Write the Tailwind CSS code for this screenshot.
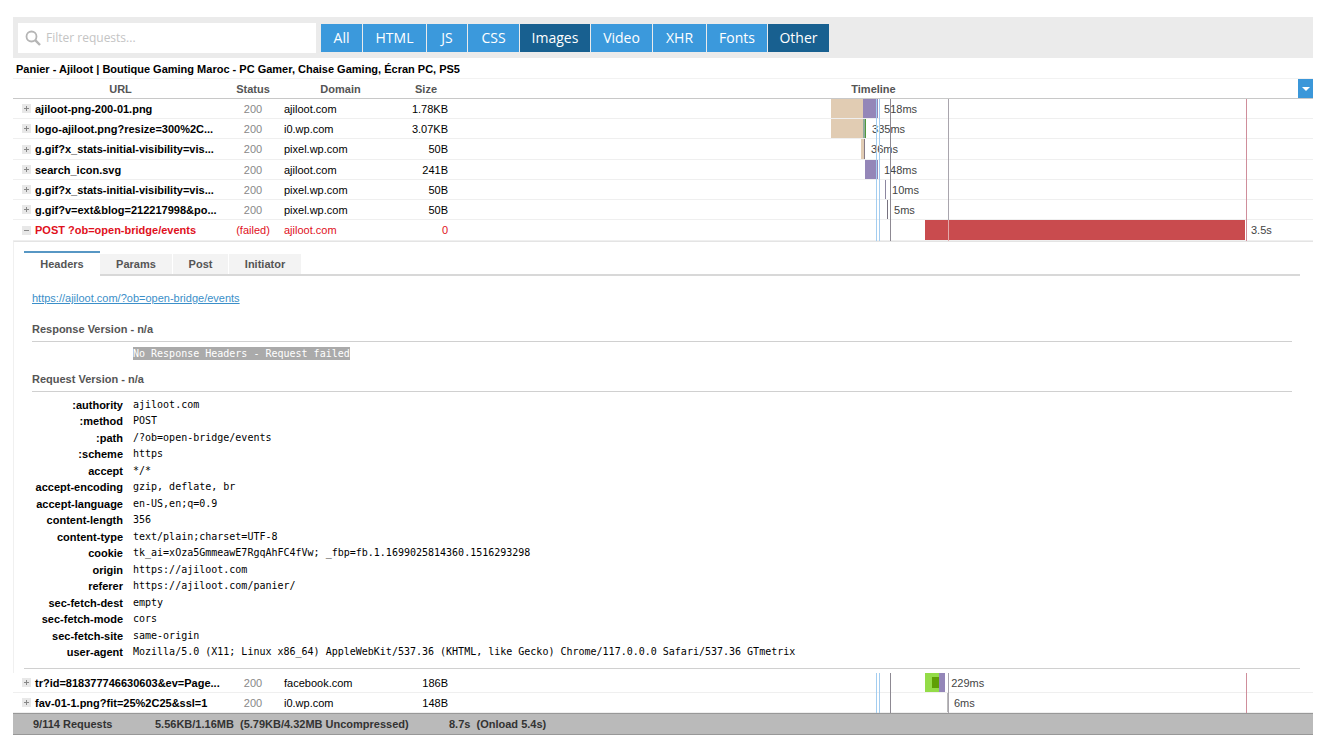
<!DOCTYPE html>
<html lang="en">
<head>
    <meta charset="UTF-8">
    <meta name="viewport" content="width=device-width, initial-scale=1.0">
    <title>Waterfall - Panier - Ajiloot</title>
    <script src="https://cdn.jsdelivr.net/npm/@tailwindcss/browser@4"></script>
</head>
<body class="bg-white pt-[17px] pl-[13px] pr-[14px] pb-2 font-['Liberation_Sans',Arial,sans-serif] text-[11px] leading-4 text-black">
    <header class="flex items-center gap-[5px] bg-[#ebebeb] pl-[5px] pt-[6px] pb-[5px] font-['Open_Sans',sans-serif]">
        <label class="flex items-center w-[298px] h-[30px] bg-white pl-[7px] gap-[5px]">
            <svg class="size-4 shrink-0" viewBox="0 0 16 16" fill="none" stroke="#b5b5b5" stroke-width="1.8" aria-hidden="true">
                <circle cx="6.5" cy="6.5" r="5"/>
                <path d="M10.2 10.2 15 15" stroke-width="2.4"/>
            </svg>
            <input type="text" aria-label="Filter requests" placeholder="Filter requests..." class="w-full text-[12px] outline-none placeholder:text-[#c4c4c4]">
        </label>
        <nav id="filters" class="flex gap-px h-7 text-[14px] text-white"></nav>
    </header>

    <main>
        <h1 class="pl-[3px] pt-[3px] pb-px font-bold">Panier - Ajiloot | Boutique Gaming Maroc - PC Gamer, Chaise Gaming, Écran PC, PS5</h1>
        <table class="w-full table-fixed border-separate border-spacing-0">
            <colgroup>
                <col class="w-[215px]">
                <col class="w-[50px]">
                <col class="w-[125px]">
                <col class="w-[46px]">
                <col>
            </colgroup>
            <thead class="text-[#555]">
                <tr class="h-[21px]">
                    <th class="p-0 border-y border-t-[#f2f2f2] border-b-[#c8c8c8]">URL</th>
                    <th class="p-0 border-y border-t-[#f2f2f2] border-b-[#c8c8c8]">Status</th>
                    <th class="p-0 border-y border-t-[#f2f2f2] border-b-[#c8c8c8]">Domain</th>
                    <th class="p-0 border-y border-t-[#f2f2f2] border-b-[#c8c8c8]">Size</th>
                    <th class="p-0 border-y border-t-[#f2f2f2] border-b-[#c8c8c8]">
                        <div class="flex items-center">
                            <span class="flex-1">Timeline</span>
                            <button type="button" aria-label="Columns" class="flex items-center justify-center w-[15px] h-[19px] bg-[#3b97d9]">
                                <svg class="w-2 h-1" viewBox="0 0 8 4" fill="#fff"><path d="M0 0h8L4 4z"/></svg>
                            </button>
                        </div>
                    </th>
                </tr>
            </thead>
            <tbody id="requests-before"></tbody>
            <tbody>
                <tr>
                    <td colspan="5" class="p-0 pt-[9px] pl-[10px] pr-[13px] pb-1 border-t border-l border-t-[#e4e4e4] border-l-[#f0f0f0]">
                        <div class="flex items-stretch h-[25px] font-bold text-[#555]">
                            <button type="button" class="w-[76px] pb-[2px] border-t-2 border-[#5797c4]">Headers</button>
                            <div class="flex flex-1 items-stretch gap-px pt-[3px] border-b-2 border-[#d8d8d8]">
                                <button type="button" class="w-[72px] bg-[#f3f3f3]">Params</button>
                                <button type="button" class="w-[55px] bg-[#f3f3f3]">Post</button>
                                <button type="button" class="w-[72px] bg-[#f3f3f3]">Initiator</button>
                            </div>
                        </div>
                        <div class="px-2 pt-[14px] pb-2 border-b border-[#d0d0d0]">
                            <a href="#" class="block w-fit text-[#3b8fc9] underline">https://ajiloot.com/?ob=open-bridge/events</a>
                            <h2 class="mt-[15px] pb-1 font-bold text-[#555] border-b border-[#d0d0d0]">Response Version - n/a</h2>
                            <p class="mt-1 pl-[101px] font-['DejaVu_Sans_Mono',monospace] text-[10px] text-white"><span class="bg-[#aaa] py-px">No Response Headers - Request failed</span></p>
                            <h2 class="mt-[9px] pb-1 font-bold text-[#555] border-b border-[#d0d0d0]">Request Version - n/a</h2>
                            <table class="mt-1 border-separate border-spacing-0">
                                <tbody id="request-headers"></tbody>
                            </table>
                        </div>
                    </td>
                </tr>
            </tbody>
            <tbody id="requests-after"></tbody>
        </table>
    </main>

    <footer class="flex pl-5 py-[2px] bg-[#bababa] border-y border-[#989898] font-bold text-[#333]">
        <span class="w-[122px]">9/114 Requests</span>
        <span class="w-[294px]">5.56KB/1.16MB &nbsp;(5.79KB/4.32MB Uncompressed)</span>
        <span>8.7s &nbsp;(Onload 5.4s)</span>
    </footer>

    <script>
        const filters = [
            ['All', 'w-[41px] bg-[#3b99dc]'],
            ['HTML', 'w-[63px] bg-[#3b99dc]'],
            ['JS', 'w-[40px] bg-[#3b99dc]'],
            ['CSS', 'w-[51px] bg-[#3b99dc]'],
            ['Images', 'w-[70px] bg-[#186090]'],
            ['Video', 'w-[61px] bg-[#3b99dc]'],
            ['XHR', 'w-[53px] bg-[#3b99dc]'],
            ['Fonts', 'w-[60px] bg-[#3b99dc]'],
            ['Other', 'w-[61px] bg-[#186090]']
        ];

        // Segments: [duration in ms, colour]
        const requests = [
            { url: 'ajiloot-png-200-01.png', domain: 'ajiloot.com', size: '1.78KB', time: '518ms', start: 4174, parts: [[350, 'bg-[#e1ccb3]'], [164, 'bg-[#9486b8]']] },
            { url: 'logo-ajiloot.png?resize=300%2C...', domain: 'i0.wp.com', size: '3.07KB', time: '335ms', start: 4174, parts: [[350, 'bg-[#e1ccb3]'], [22, 'bg-[#8fab9c]'], [11, 'bg-[#4f9a3c]']] },
            { url: 'g.gif?x_stats-initial-visibility=vis...', domain: 'pixel.wp.com', size: '50B', time: '36ms', start: 4502, parts: [[33, 'bg-[#e1ccb3]'], [11, 'bg-[#857a86]']] },
            { url: 'search_icon.svg', domain: 'ajiloot.com', size: '241B', time: '148ms', start: 4545, parts: [[142, 'bg-[#9486b8]']] },
            { url: 'g.gif?x_stats-initial-visibility=vis...', domain: 'pixel.wp.com', size: '50B', time: '10ms', start: 4764, parts: [[10, 'bg-[#8c86a0]']] },
            { url: 'g.gif?v=ext&blog=212217998&po...', domain: 'pixel.wp.com', size: '50B', time: '5ms', start: 4786, parts: [[5, 'bg-[#77727f]']] },
            { url: 'POST ?ob=open-bridge/events', domain: 'ajiloot.com', size: '0', time: '3.5s', start: 5201, parts: [[3496, 'bg-[#c94b4e]']], failed: true },
            { url: 'tr?id=818377746630603&ev=Page...', domain: 'facebook.com', size: '186B', time: '229ms', start: 5201, parts: [[77, 'bg-[#94dc48]'], [77, 'bg-[#5f9f06] border-y-4 border-[#94dc48]'], [66, 'bg-[#9486b8]']] },
            { url: 'fav-01-1.png?fit=25%2C25&ssl=1', domain: 'i0.wp.com', size: '148B', time: '6ms', start: 5441, parts: [[6, 'bg-[#bbb]']] }
        ];

        // Page events drawn over every timeline row: [ms, colour, colour on a failed row]
        const events = [
            [4666, 'bg-[#a3cdf0]', 'bg-[#a3cdf0]'],
            [4698, 'bg-[#a3cdf0]', 'bg-[#a3cdf0]'],
            [4819, 'bg-[#8d8992]', 'bg-[#8d8992]'],
            [5453, 'bg-[#a9a5ad]', 'bg-[#e3a9ab]'],
            [8709, 'bg-[#cf8e9b]', 'bg-[#cf8e9b]']
        ];

        const headers = [
            [':authority', 'ajiloot.com'],
            [':method', 'POST'],
            [':path', '/?ob=open-bridge/events'],
            [':scheme', 'https'],
            ['accept', '*/*'],
            ['accept-encoding', 'gzip, deflate, br'],
            ['accept-language', 'en-US,en;q=0.9'],
            ['content-length', '356'],
            ['content-type', 'text/plain;charset=UTF-8'],
            ['cookie', 'tk_ai=xOza5GmmeawE7RgqAhFC4fVw; _fbp=fb.1.1699025814360.1516293298'],
            ['origin', 'https://ajiloot.com'],
            ['referer', 'https://ajiloot.com/panier/'],
            ['sec-fetch-dest', 'empty'],
            ['sec-fetch-mode', 'cors'],
            ['sec-fetch-site', 'same-origin'],
            ['user-agent', 'Mozilla/5.0 (X11; Linux x86_64) AppleWebKit/537.36 (KHTML, like Gecko) Chrome/117.0.0.0 Safari/537.36 GTmetrix']
        ];

        const SPAN = 9440;
        const pct = (ms) => `${ms / SPAN * 100}%`;
        const esc = (text) => text.replace(/&/g, '&amp;');

        const eventLines = (failed) => events.map(([ms, color, failedColor]) =>
            `<span class="absolute top-0 -bottom-px w-px ${failed ? failedColor : color}" style="left:${pct(ms)}"></span>`).join('');

        const requestRow = (r) => `
            <tr class="${r.failed ? 'h-[21px] text-[#e0101c]' : 'h-5 nth-3:h-[21px]'}">
                <td class="p-0 pl-[9px] border-b border-[#efefef] whitespace-nowrap">
                    <div class="flex items-center gap-1 font-bold">
                        <button type="button" aria-label="${r.failed ? 'Collapse' : 'Expand'}" class="bg-[#e8e8e8]">
                            <svg class="size-[9px]" viewBox="0 0 9 9" stroke="#888" fill="none"><path d="${r.failed ? 'M2 4.5h5' : 'M2 4.5h5M4.5 2v5'}"/></svg>
                        </button>
                        <span>${esc(r.url)}</span>
                    </div>
                </td>
                <td class="p-0 border-b border-[#efefef] text-center ${r.failed ? '' : 'text-[#888]'}">${r.failed ? '(failed)' : '200'}</td>
                <td class="p-0 pl-[6px] border-b border-[#efefef]">${r.domain}</td>
                <td class="p-0 pr-px border-b border-[#efefef] text-right">${r.size}</td>
                <td class="relative h-px p-0 border-b border-[#efefef] text-[#444]">
                    <div class="flex h-full">
                        <span class="shrink-0" style="width:${pct(r.start)}"></span>
                        ${r.parts.map(([ms, color]) => `<span class="shrink-0 min-w-px ${color}" style="width:${pct(ms)}"></span>`).join('')}
                        <span class="self-center pl-[6px]">${r.time}</span>
                    </div>
                    ${eventLines(r.failed)}
                </td>
            </tr>`;

        document.getElementById('filters').innerHTML = filters.map(([name, style]) =>
            `<button type="button" class="${style}">${name}</button>`).join('');
        document.getElementById('requests-before').innerHTML = requests.slice(0, 7).map(requestRow).join('');
        document.getElementById('requests-after').innerHTML = requests.slice(7).map(requestRow).join('');
        document.getElementById('request-headers').innerHTML = headers.map(([name, value]) => `
            <tr class="h-4 odd:h-[17px]">
                <th class="p-0 w-[91px] text-right whitespace-nowrap">${name}</th>
                <td class="p-0 pl-[10px] font-['DejaVu_Sans_Mono',monospace] text-[10px]">${value}</td>
            </tr>`).join('');
    </script>
</body>
</html>
